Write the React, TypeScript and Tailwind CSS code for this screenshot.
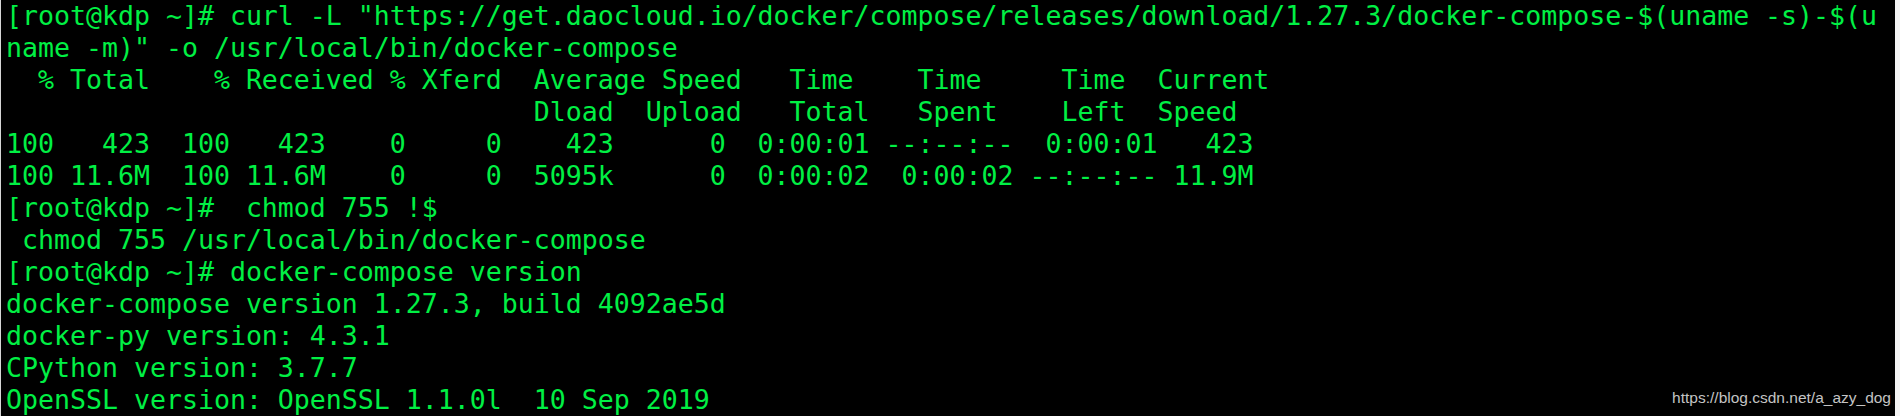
const lines = [
  `[root@kdp ~]# curl -L "https://get.daocloud.io/docker/compose/releases/download/1.27.3/docker-compose-$(uname -s)-$(u`,
  `name -m)" -o /usr/local/bin/docker-compose`,
  `  % Total    % Received % Xferd  Average Speed   Time    Time     Time  Current`,
  `                                 Dload  Upload   Total   Spent    Left  Speed`,
  `100   423  100   423    0     0    423      0  0:00:01 --:--:--  0:00:01   423`,
  `100 11.6M  100 11.6M    0     0  5095k      0  0:00:02  0:00:02 --:--:-- 11.9M`,
  `[root@kdp ~]#  chmod 755 !$`,
  ` chmod 755 /usr/local/bin/docker-compose`,
  `[root@kdp ~]# docker-compose version`,
  `docker-compose version 1.27.3, build 4092ae5d`,
  `docker-py version: 4.3.1`,
  `CPython version: 3.7.7`,
  `OpenSSL version: OpenSSL 1.1.0l  10 Sep 2019`,
];

export default function App() {
  return (
    <div className="flex w-[1900px] h-[416px] bg-[#f4f4f4] overflow-hidden">
      <div className="w-px bg-[#d6d6d6]" />
      {/* terminal */}
      <div className="relative flex-1 bg-black pl-[5px] overflow-hidden">
        <div className="font-['DejaVu_Sans_Mono',monospace] text-[26.57px] leading-[32px] text-[#00f044] whitespace-pre">
          {lines.map((l, i) => (
            <div key={i}>{l}</div>
          ))}
        </div>
        <div className="absolute right-[4px] bottom-[11px] font-['Liberation_Sans',Arial,sans-serif] text-[15.5px] leading-none text-[#c4c4c4]">
          https://blog.csdn.net/a_azy_dog
        </div>
      </div>
      <div className="w-[5px] bg-[#f4f4f4]" />
    </div>
  );
}
